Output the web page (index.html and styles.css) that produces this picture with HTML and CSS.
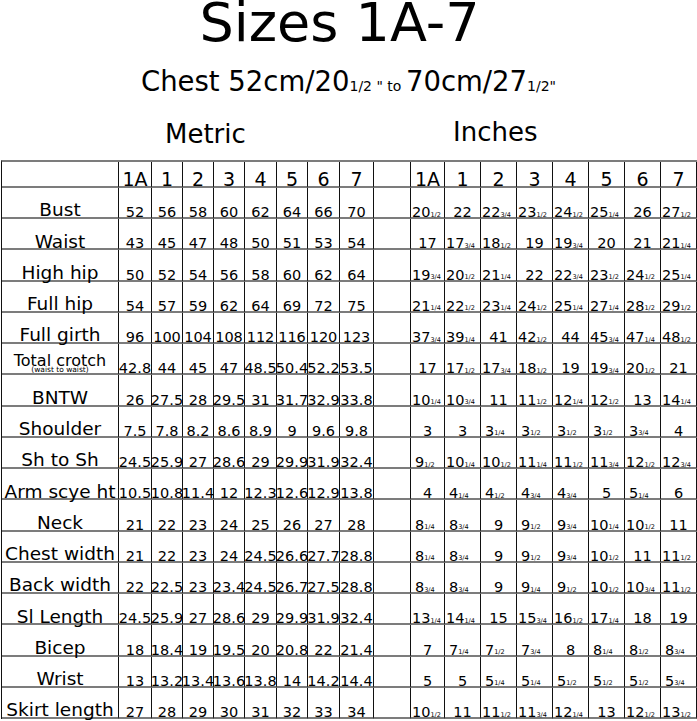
FILE: index.html
```html
<!DOCTYPE html>
<html lang="en">
<head>
<meta charset="utf-8">
<title>Sizes 1A-7</title>
<link rel="stylesheet" href="styles.css">
</head>
<body>
<h1 class="title">Sizes 1A-7</h1>
<p class="subtitle">Chest 52cm/20<small>1/2 " to </small>70cm/27<small>1/2"</small></p>
<div class="units"><span class="metric">Metric</span><span class="inches">Inches</span></div>
<div class="grid">
<div class="c"></div>
<div class="c h">1A</div><div class="c h">1</div><div class="c h">2</div><div class="c h">3</div><div class="c h">4</div><div class="c h">5</div><div class="c h">6</div><div class="c h">7</div>
<div class="c"></div>
<div class="c h">1A</div><div class="c h">1</div><div class="c h">2</div><div class="c h">3</div><div class="c h">4</div><div class="c h">5</div><div class="c h">6</div><div class="c h">7</div>

<div class="c lab">Bust</div>
<div class="c m">52</div><div class="c m">56</div><div class="c m">58</div><div class="c m">60</div><div class="c m">62</div><div class="c m">64</div><div class="c m">66</div><div class="c m">70</div>
<div class="c"></div>
<div class="c m f">20<small>1/2</small></div><div class="c m">22</div><div class="c m f">22<small>3/4</small></div><div class="c m f">23<small>1/2</small></div><div class="c m f">24<small>1/2</small></div><div class="c m f">25<small>1/4</small></div><div class="c m">26</div><div class="c m f">27<small>1/2</small></div>

<div class="c lab">Waist</div>
<div class="c m">43</div><div class="c m">45</div><div class="c m">47</div><div class="c m">48</div><div class="c m">50</div><div class="c m">51</div><div class="c m">53</div><div class="c m">54</div>
<div class="c"></div>
<div class="c m">17</div><div class="c m f">17<small>3/4</small></div><div class="c m f">18<small>1/2</small></div><div class="c m">19</div><div class="c m f">19<small>3/4</small></div><div class="c m">20</div><div class="c m">21</div><div class="c m f">21<small>1/4</small></div>

<div class="c lab">High hip</div>
<div class="c m">50</div><div class="c m">52</div><div class="c m">54</div><div class="c m">56</div><div class="c m">58</div><div class="c m">60</div><div class="c m">62</div><div class="c m">64</div>
<div class="c"></div>
<div class="c m f">19<small>3/4</small></div><div class="c m f">20<small>1/2</small></div><div class="c m f">21<small>1/4</small></div><div class="c m">22</div><div class="c m f">22<small>3/4</small></div><div class="c m f">23<small>1/2</small></div><div class="c m f">24<small>1/2</small></div><div class="c m f">25<small>1/4</small></div>

<div class="c lab">Full hip</div>
<div class="c m">54</div><div class="c m">57</div><div class="c m">59</div><div class="c m">62</div><div class="c m">64</div><div class="c m">69</div><div class="c m">72</div><div class="c m">75</div>
<div class="c"></div>
<div class="c m f">21<small>1/4</small></div><div class="c m f">22<small>1/2</small></div><div class="c m f">23<small>1/4</small></div><div class="c m f">24<small>1/2</small></div><div class="c m f">25<small>1/4</small></div><div class="c m f">27<small>1/4</small></div><div class="c m f">28<small>1/2</small></div><div class="c m f">29<small>1/2</small></div>

<div class="c lab">Full girth</div>
<div class="c m">96</div><div class="c m">100</div><div class="c m">104</div><div class="c m">108</div><div class="c m">112</div><div class="c m">116</div><div class="c m">120</div><div class="c m">123</div>
<div class="c"></div>
<div class="c m f">37<small>3/4</small></div><div class="c m f">39<small>1/4</small></div><div class="c m">41</div><div class="c m f">42<small>1/2</small></div><div class="c m">44</div><div class="c m f">45<small>3/4</small></div><div class="c m f">47<small>1/4</small></div><div class="c m f">48<small>1/2</small></div>

<div class="c lab tc"><span class="tc1">Total crotch</span><span class="tc2">(waist to waist)</span></div>
<div class="c m">42.8</div><div class="c m">44</div><div class="c m">45</div><div class="c m">47</div><div class="c m">48.5</div><div class="c m">50.4</div><div class="c m">52.2</div><div class="c m">53.5</div>
<div class="c"></div>
<div class="c m">17</div><div class="c m f">17<small>1/2</small></div><div class="c m f">17<small>3/4</small></div><div class="c m f">18<small>1/2</small></div><div class="c m">19</div><div class="c m f">19<small>3/4</small></div><div class="c m f">20<small>1/2</small></div><div class="c m">21</div>

<div class="c lab">BNTW</div>
<div class="c m">26</div><div class="c m">27.5</div><div class="c m">28</div><div class="c m">29.5</div><div class="c m">31</div><div class="c m">31.7</div><div class="c m">32.9</div><div class="c m">33.8</div>
<div class="c"></div>
<div class="c m f">10<small>1/4</small></div><div class="c m f">10<small>3/4</small></div><div class="c m">11</div><div class="c m f">11<small>1/2</small></div><div class="c m f">12<small>1/4</small></div><div class="c m f">12<small>1/2</small></div><div class="c m">13</div><div class="c m f">14<small>1/4</small></div>

<div class="c lab">Shoulder</div>
<div class="c m">7.5</div><div class="c m">7.8</div><div class="c m">8.2</div><div class="c m">8.6</div><div class="c m">8.9</div><div class="c m">9</div><div class="c m">9.6</div><div class="c m">9.8</div>
<div class="c"></div>
<div class="c m">3</div><div class="c m">3</div><div class="c m s">3<small>1/4</small></div><div class="c m s">3<small>1/2</small></div><div class="c m s">3<small>1/2</small></div><div class="c m s">3<small>1/2</small></div><div class="c m s">3<small>3/4</small></div><div class="c m">4</div>

<div class="c lab">Sh to Sh</div>
<div class="c m">24.5</div><div class="c m">25.9</div><div class="c m">27</div><div class="c m">28.6</div><div class="c m">29</div><div class="c m">29.9</div><div class="c m">31.9</div><div class="c m">32.4</div>
<div class="c"></div>
<div class="c m s">9<small>1/2</small></div><div class="c m f">10<small>1/4</small></div><div class="c m f">10<small>1/2</small></div><div class="c m f">11<small>1/4</small></div><div class="c m f">11<small>1/2</small></div><div class="c m f">11<small>3/4</small></div><div class="c m f">12<small>1/2</small></div><div class="c m f">12<small>3/4</small></div>

<div class="c lab">Arm scye ht</div>
<div class="c m">10.5</div><div class="c m">10.8</div><div class="c m">11.4</div><div class="c m">12</div><div class="c m">12.3</div><div class="c m">12.6</div><div class="c m">12.9</div><div class="c m">13.8</div>
<div class="c"></div>
<div class="c m">4</div><div class="c m s">4<small>1/4</small></div><div class="c m s">4<small>1/2</small></div><div class="c m s">4<small>3/4</small></div><div class="c m s">4<small>3/4</small></div><div class="c m">5</div><div class="c m s">5<small>1/4</small></div><div class="c m">6</div>

<div class="c lab">Neck</div>
<div class="c m">21</div><div class="c m">22</div><div class="c m">23</div><div class="c m">24</div><div class="c m">25</div><div class="c m">26</div><div class="c m">27</div><div class="c m">28</div>
<div class="c"></div>
<div class="c m s">8<small>1/4</small></div><div class="c m s">8<small>3/4</small></div><div class="c m">9</div><div class="c m s">9<small>1/2</small></div><div class="c m s">9<small>3/4</small></div><div class="c m f">10<small>1/4</small></div><div class="c m f">10<small>1/2</small></div><div class="c m">11</div>

<div class="c lab">Chest width</div>
<div class="c m">21</div><div class="c m">22</div><div class="c m">23</div><div class="c m">24</div><div class="c m">24.5</div><div class="c m">26.6</div><div class="c m">27.7</div><div class="c m">28.8</div>
<div class="c"></div>
<div class="c m s">8<small>1/4</small></div><div class="c m s">8<small>3/4</small></div><div class="c m">9</div><div class="c m s">9<small>1/2</small></div><div class="c m s">9<small>3/4</small></div><div class="c m f">10<small>1/2</small></div><div class="c m">11</div><div class="c m f">11<small>1/2</small></div>

<div class="c lab">Back width</div>
<div class="c m">22</div><div class="c m">22.5</div><div class="c m">23</div><div class="c m">23.4</div><div class="c m">24.5</div><div class="c m">26.7</div><div class="c m">27.5</div><div class="c m">28.8</div>
<div class="c"></div>
<div class="c m s">8<small>3/4</small></div><div class="c m s">8<small>3/4</small></div><div class="c m">9</div><div class="c m s">9<small>1/4</small></div><div class="c m s">9<small>1/2</small></div><div class="c m f">10<small>1/2</small></div><div class="c m f">10<small>3/4</small></div><div class="c m f">11<small>1/2</small></div>

<div class="c lab">Sl Length</div>
<div class="c m">24.5</div><div class="c m">25.9</div><div class="c m">27</div><div class="c m">28.6</div><div class="c m">29</div><div class="c m">29.9</div><div class="c m">31.9</div><div class="c m">32.4</div>
<div class="c"></div>
<div class="c m f">13<small>1/4</small></div><div class="c m f">14<small>1/4</small></div><div class="c m">15</div><div class="c m f">15<small>3/4</small></div><div class="c m f">16<small>1/2</small></div><div class="c m f">17<small>1/4</small></div><div class="c m">18</div><div class="c m">19</div>

<div class="c lab">Bicep</div>
<div class="c m">18</div><div class="c m">18.4</div><div class="c m">19</div><div class="c m">19.5</div><div class="c m">20</div><div class="c m">20.8</div><div class="c m">22</div><div class="c m">21.4</div>
<div class="c"></div>
<div class="c m">7</div><div class="c m s">7<small>1/4</small></div><div class="c m s">7<small>1/2</small></div><div class="c m s">7<small>3/4</small></div><div class="c m">8</div><div class="c m s">8<small>1/4</small></div><div class="c m s">8<small>1/2</small></div><div class="c m s">8<small>3/4</small></div>

<div class="c lab">Wrist</div>
<div class="c m">13</div><div class="c m">13.2</div><div class="c m">13.4</div><div class="c m">13.6</div><div class="c m">13.8</div><div class="c m">14</div><div class="c m">14.2</div><div class="c m">14.4</div>
<div class="c"></div>
<div class="c m">5</div><div class="c m">5</div><div class="c m s">5<small>1/4</small></div><div class="c m s">5<small>1/4</small></div><div class="c m s">5<small>1/2</small></div><div class="c m s">5<small>1/2</small></div><div class="c m s">5<small>1/2</small></div><div class="c m s">5<small>3/4</small></div>

<div class="c lab">Skirt length</div>
<div class="c m">27</div><div class="c m">28</div><div class="c m">29</div><div class="c m">30</div><div class="c m">31</div><div class="c m">32</div><div class="c m">33</div><div class="c m">34</div>
<div class="c"></div>
<div class="c m f">10<small>1/2</small></div><div class="c m">11</div><div class="c m f">11<small>1/2</small></div><div class="c m f">11<small>3/4</small></div><div class="c m f">12<small>1/4</small></div><div class="c m">13</div><div class="c m f">12<small>1/2</small></div><div class="c m f">13<small>1/2</small></div>
</div>
</body>
</html>
```

FILE: styles.css
```css
* { box-sizing: border-box; }
html, body { margin: 0; padding: 0; background: #fff; }
body {
  width: 697px;
  height: 721px;
  overflow: hidden;
  font-family: "DejaVu Sans", Verdana, sans-serif;
  color: #000;
}
.title {
  margin: 0;
  font-size: 54px;
  font-weight: normal;
  line-height: 46px;
  text-align: center;
  padding-right: 18px;
  white-space: nowrap;
}
.subtitle {
  margin: 19px 0 0;
  font-size: 27.5px;
  line-height: 32px;
  text-align: center;
  white-space: nowrap;
}
.subtitle small {
  font-size: 14px;
  line-height: 0;
}
.units {
  display: flex;
  align-items: flex-start;
  margin-top: 20px;
  padding-left: 165px;
  font-size: 26px;
  line-height: 30px;
}
.metric { width: 288px; margin-top: 2px; }
.grid {
  display: grid;
  margin: 11px 0 0 1px;
  border-left: 1px solid #111;
  border-top: 2px solid #7c7c7c;
  grid-template-columns: 117px 33px 31px 31px 31px 32px 31px 32px 34px 37px 34px 36px 36px 36px 36px 36px 36px 36px;
  grid-template-rows: 26px repeat(17, 31.24px);
}
.c {
  display: flex;
  flex-direction: row;
  justify-content: center;
  align-items: flex-end;
  border-right: 1px solid #111;
  border-bottom: 2px solid #7c7c7c;
  line-height: 0.69;
  white-space: nowrap;
  min-width: 0;
}
.h { font-size: 19px; }
.lab { font-size: 18.5px; }
.m { font-size: 14.5px; }
.m small { font-size: 6.5px; line-height: 0.69; }
.f { justify-content: flex-start; padding-left: 1px; }
.s { justify-content: flex-start; padding-left: 4px; }
.tc { flex-direction: column; align-items: center; justify-content: flex-end; }
.tc1 { font-size: 16px; line-height: 11px; }
.tc2 { font-size: 7.5px; line-height: 7px; }
```
